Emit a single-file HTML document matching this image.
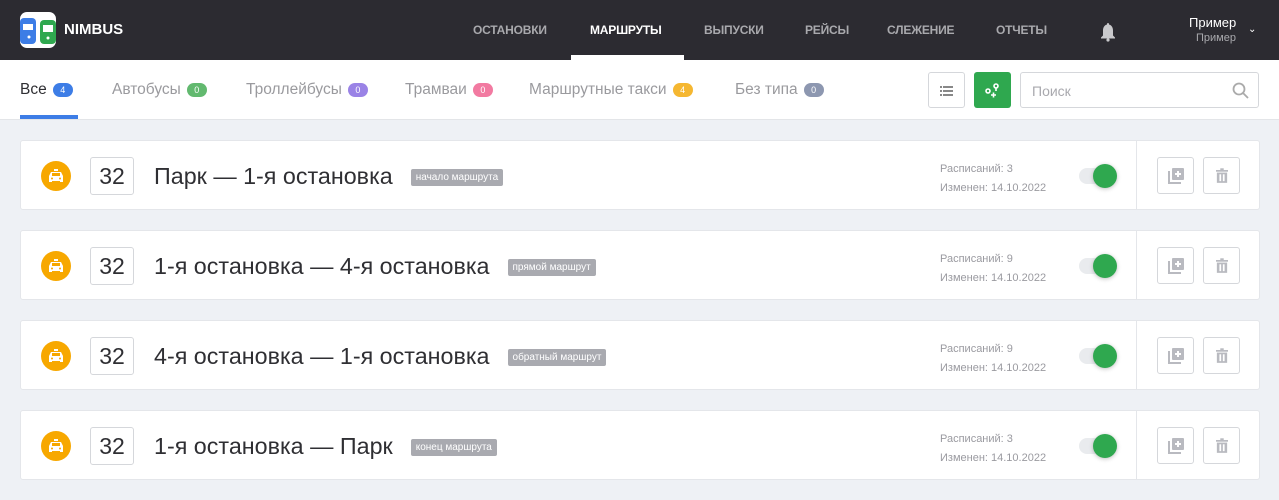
<!DOCTYPE html>
<html><head><meta charset="utf-8"><style>
*{box-sizing:border-box;margin:0;padding:0}
body{width:1279px;height:500px;overflow:hidden;background:#eef1f5;font-family:"Liberation Sans",sans-serif;position:relative}
.hdr{position:absolute;left:0;top:0;width:1279px;height:60px;background:#2c2b31}
.nav{position:absolute;top:23px;font-size:12px;font-weight:bold;color:#a9a9ad;letter-spacing:-0.2px}
.tabs{position:absolute;top:60px;left:0;width:1279px;height:60px;background:#fff;border-bottom:1px solid #e3e5e8}
.tab{position:absolute;top:81px;font-size:15.5px;color:#9a9a9e}
.bd{display:inline-block;height:14px;min-width:20px;border-radius:7px;color:#fff;font-size:9px;text-align:center;line-height:14px;margin-left:6px;vertical-align:1px}
.card{position:absolute;left:20px;width:1240px;height:70px;background:#fff;border:1px solid #e4e6ea;border-radius:3px}
.ic{position:absolute;left:20px;top:20px;width:30px;height:30px;border-radius:50%;background:#f7a800}
.num{position:absolute;left:69px;top:16px;width:44px;height:38px;border:1px solid #d5d7db;border-radius:3px;font-size:23px;color:#2f2f33;text-align:center;line-height:37px}
.ttl{position:absolute;left:133px;top:22px;font-size:23.3px;color:#2f2f33}
.tag{display:inline-block;background:#a9aab0;color:#fff;font-size:10px;padding:3px 5px;border-radius:2px;margin-left:18px;vertical-align:4px}
.meta{position:absolute;left:919px;top:19px;font-size:11px;color:#9a9aa0;line-height:19px}
.tg{position:absolute;left:1058px;top:27px;width:36px;height:16px;border-radius:8px;background:#e9ebee}
.tg i{position:absolute;left:14px;top:-4px;width:24px;height:24px;border-radius:50%;background:#2fa84f;box-shadow:0 1px 4px rgba(0,0,0,.25)}
.sep{position:absolute;left:1115px;top:0;width:1px;height:68px;background:#e4e6ea}
.btn{position:absolute;top:16px;width:37px;height:37px;border:1px solid #d5d7db;border-radius:3px}
</style></head><body>
<div class="hdr">
 <svg style="position:absolute;left:20px;top:12px" width="36" height="36" viewBox="0 0 36 36"><rect width="36" height="36" rx="7" fill="#fff"/><rect x="0" y="6" width="16" height="26" rx="4" fill="#3d7de6"/><rect x="3" y="12" width="10" height="6" fill="#fff"/><circle cx="9" cy="25" r="1.5" fill="#fff"/><rect x="20" y="8" width="16" height="24" rx="4" fill="#2fa84f"/><rect x="23" y="13" width="10" height="7" fill="#fff"/><circle cx="28" cy="26" r="1.5" fill="#fff"/></svg>
 <div style="position:absolute;left:64px;top:21px;color:#fff;font-weight:bold;font-size:15px">NIMBUS</div>
 <div class="nav" style="left:473px">ОСТАНОВКИ</div>
 <div class="nav" style="left:590px;color:#fff">МАРШРУТЫ</div>
 <div class="nav" style="left:704px">ВЫПУСКИ</div>
 <div class="nav" style="left:805px">РЕЙСЫ</div>
 <div class="nav" style="left:887px">СЛЕЖЕНИЕ</div>
 <div class="nav" style="left:996px">ОТЧЕТЫ</div>
 <div style="position:absolute;left:571px;top:55px;width:113px;height:5px;background:#fff"></div>
 <svg style="position:absolute;left:1099px;top:22px" width="18" height="20" viewBox="0 0 18 20"><path d="M9 1c1 0 1 1 1 1.5 3 .8 4 3.5 4 6v5l2 2v1H2v-1l2-2v-5c0-2.5 1-5.2 4-6C8 2 8 1 9 1z" fill="#c9c9cc"/><circle cx="9" cy="18" r="1.6" fill="#c9c9cc"/></svg>
 <div style="position:absolute;left:1189px;top:15px;color:#fff;font-size:13px">Пример</div>
 <div style="position:absolute;left:1196px;top:32px;color:#a9a9ad;font-size:11px">Пример</div>
 <div style="position:absolute;left:1248px;top:24px;color:#fff;font-size:10px">&#8964;</div>
</div>
<div class="tabs"></div>
<div class="tab" style="left:20px;color:#2f2f33">Все<span class="bd" style="background:#3d7de6">4</span></div>
<div style="position:absolute;left:20px;top:115px;width:58px;height:4px;background:#3d7de6"></div>
<div class="tab" style="left:112px">Автобусы<span class="bd" style="background:#62b96f">0</span></div>
<div class="tab" style="left:246px">Троллейбусы<span class="bd" style="background:#9a83e6">0</span></div>
<div class="tab" style="left:405px">Трамваи<span class="bd" style="background:#f27aa1">0</span></div>
<div class="tab" style="left:529px">Маршрутные такси<span class="bd" style="background:#f5b731">4</span></div>
<div class="tab" style="left:735px">Без типа<span class="bd" style="background:#8d97b0">0</span></div>
<div style="position:absolute;left:928px;top:72px;width:37px;height:36px;border:1px solid #d5d7db;border-radius:3px"><svg style="position:absolute;left:11px;top:12px" width="14" height="11"><g fill="#888"><rect x="0" y="1" width="2" height="2"/><rect x="3" y="1" width="10" height="2"/><rect x="0" y="5" width="2" height="2"/><rect x="3" y="5" width="10" height="2"/><rect x="0" y="9" width="2" height="2"/><rect x="3" y="9" width="10" height="2"/></g></svg></div>
<div style="position:absolute;left:974px;top:72px;width:37px;height:36px;background:#2fa84f;border-radius:3px"><svg style="position:absolute;left:10px;top:10px" width="18" height="18" viewBox="0 0 18 18" fill="none" stroke="#fff" stroke-width="1.6"><circle cx="4" cy="9" r="2"/><circle cx="12" cy="4" r="2"/><path d="M12 6v3M7 13h5M9.5 10.5v5"/></svg></div>
<div style="position:absolute;left:1020px;top:72px;width:239px;height:36px;border:1px solid #d5d7db;border-radius:3px;background:#fff"><span style="position:absolute;left:11px;top:10px;font-size:14px;color:#a9a9ae">Поиск</span><svg style="position:absolute;left:211px;top:9px" width="17" height="17" fill="none" stroke="#aaa" stroke-width="1.8"><circle cx="7" cy="7" r="5.5"/><path d="M11 11l5 5"/></svg></div>

<div id="cards"></div>
<script>
var d=[["Парк — 1-я остановка","начало маршрута",3],["1-я остановка — 4-я остановка","прямой маршрут",9],["4-я остановка — 1-я остановка","обратный маршрут",9],["1-я остановка — Парк","конец маршрута",3]];
var h="";d.forEach(function(r,i){var t=140+i*90;h+='<div class="card" style="top:'+t+'px"><div class="ic"><svg style="position:absolute;left:7px;top:8px" width="16" height="14" viewBox="0 0 16 14"><rect x="6" y="0" width="4" height="2" fill="#fff"/><path d="M3 3h10l2 4v6h-3v-1H4v1H1V7z" fill="#fff"/><rect x="4" y="4" width="8" height="3" fill="#f7a800"/><circle cx="4" cy="9.5" r="1" fill="#f7a800"/><circle cx="12" cy="9.5" r="1" fill="#f7a800"/></svg></div><div class="num">32</div><div class="ttl">'+r[0]+'<span class="tag">'+r[1]+'</span></div><div class="meta">Расписаний: '+r[2]+'<br>Изменен: 14.10.2022</div><div class="tg"><i></i></div><div class="sep"></div><div class="btn" style="left:1136px"><svg style="position:absolute;left:9px;top:9px" width="18" height="18" viewBox="0 0 18 18" fill="#b9bac0"><path d="M1 4h2v11h11v2H1z"/><rect x="5" y="1" width="12" height="12" rx="1"/><path d="M10 4h2v2h2v2h-2v2h-2V8H8V6h2z" fill="#fff"/></svg></div><div class="btn" style="left:1182px"><svg style="position:absolute;left:12px;top:10px" width="12" height="16" viewBox="0 0 14 18" fill="#b9bac0"><rect x="0" y="2" width="14" height="2"/><rect x="5" y="0" width="4" height="2"/><path d="M1 5h12v12H1z"/><rect x="4" y="7" width="2" height="8" fill="#fff"/><rect x="8" y="7" width="2" height="8" fill="#fff"/></svg></div></div>'});
document.getElementById("cards").innerHTML=h;
</script>
</body></html>
